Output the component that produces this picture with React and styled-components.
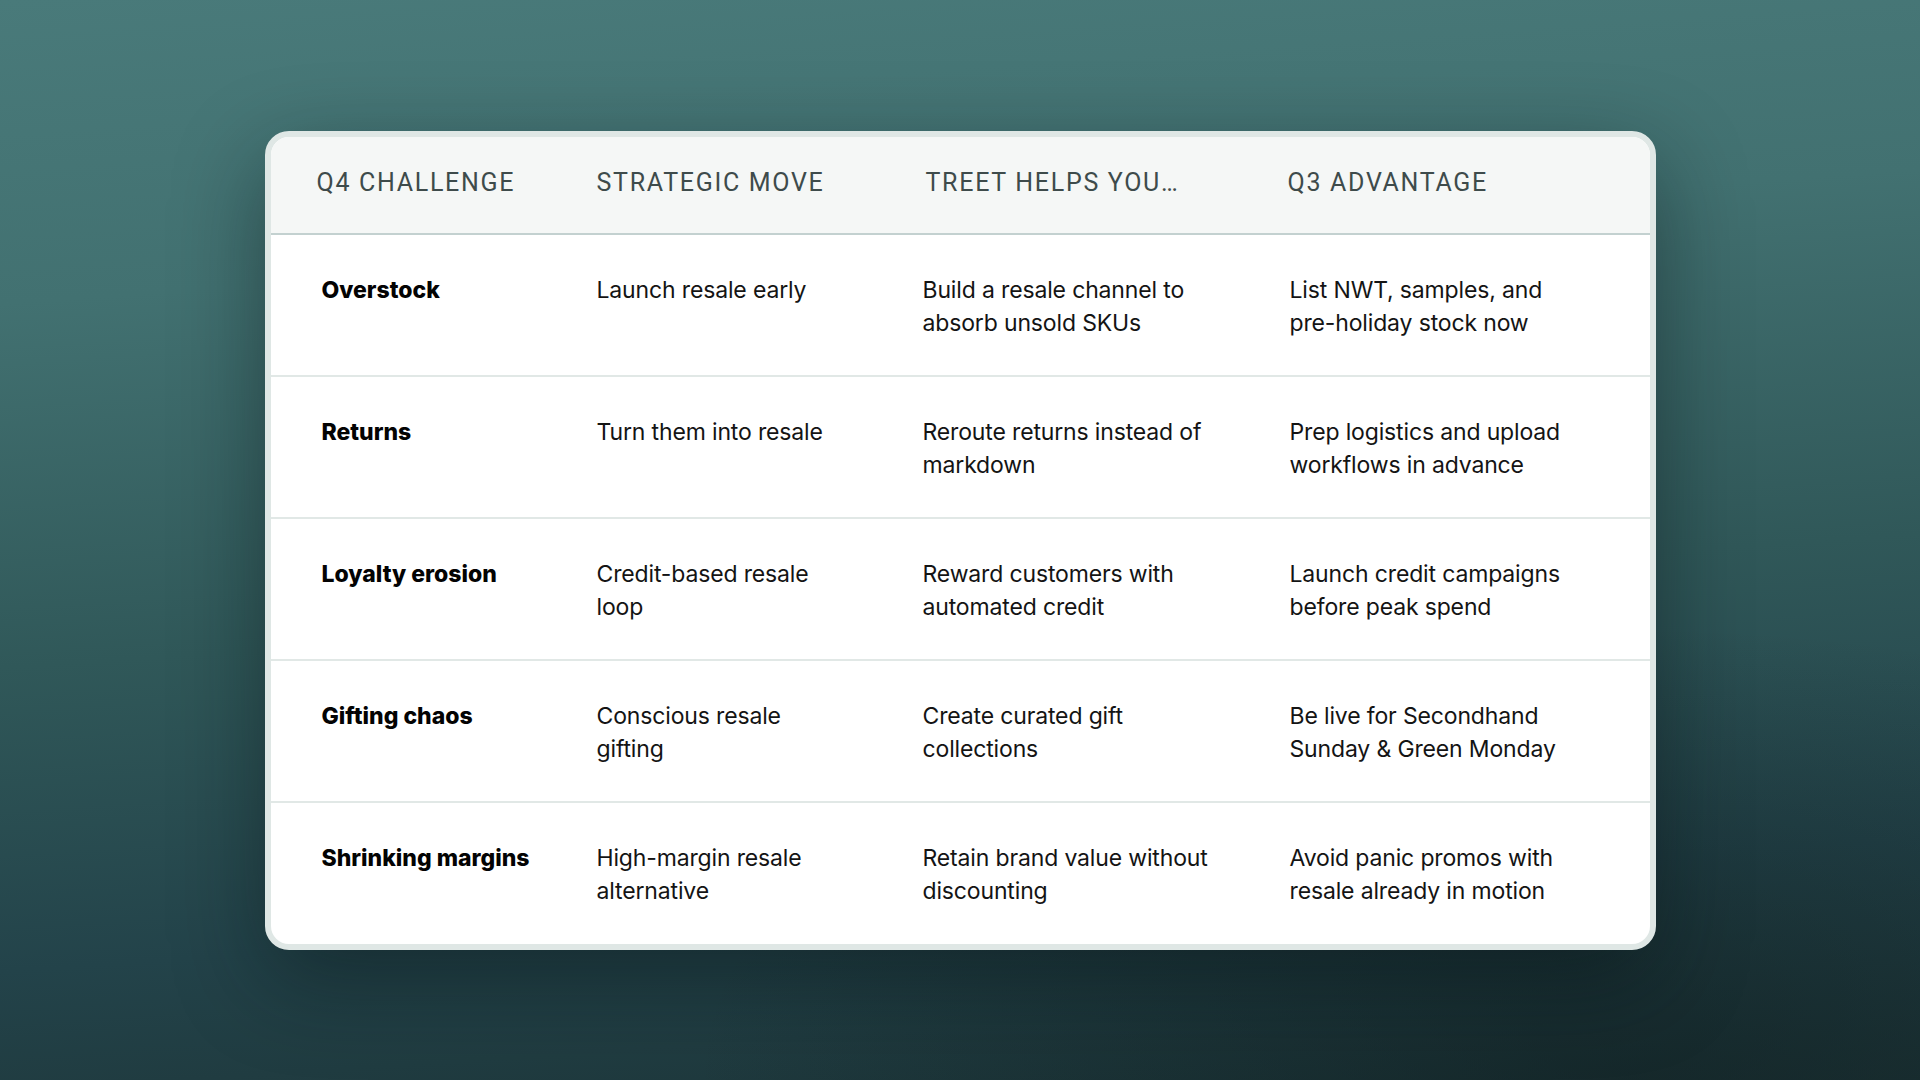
import React from 'react';
import styled, { createGlobalStyle } from 'styled-components';

const GlobalStyle = createGlobalStyle`
	html, body {
		margin: 0;
		padding: 0;
		height: 100%;
	}

	body {
		font-family: Inter, 'Liberation Sans', sans-serif;
		-webkit-font-smoothing: antialiased;
	}
`;

const Page = styled.div`
	display: flex;
	align-items: center;
	justify-content: center;

	width: 1920px;
	height: 1080px;

	background:
		radial-gradient(ellipse 70% 60% at 85% 100%, rgba(14, 28, 30, 0.55), rgba(14, 28, 30, 0) 70%),
		linear-gradient(176deg, #497a7a 0%, #427171 25%, #305859 55%, #23434a 80%, #1d3538 100%);
`;

const Card = styled.div`
	box-sizing: border-box;
	width: 1391px;

	border: 6px solid #dfe7e5;
	border-radius: 24px;
	overflow: hidden;

	background: #ffffff;
	box-shadow: 0 30px 90px rgba(6, 18, 20, 0.45);
`;

const GRID = '278px 326px 367px 1fr';

const HeaderRow = styled.div`
	display: grid;
	grid-template-columns: ${GRID};
	align-items: center;

	height: 98px;
	box-sizing: border-box;
	padding: 0 0 4px 48px;

	background: #f5f7f6;
	border-bottom: 2px solid #c3d1d0;
`;

const HeaderCell = styled.div`
	font-family: Roboto, 'Liberation Sans', sans-serif;
	font-size: 25px;
	font-weight: 400;
	letter-spacing: 1.7px;
	color: #3e4b4b;
	white-space: nowrap;
	margin-left: ${(p) => p.$shift || 0}px;
`;

const Row = styled.div`
	display: grid;
	grid-template-columns: ${GRID};
	align-items: start;

	height: 142px;
	box-sizing: border-box;
	padding: 39px 0 0 48px;

	border-bottom: 2px solid #e1e8e6;

	&:last-child {
		height: 141px;
		border-bottom: none;
	}
`;

const Cell = styled.div`
	font-size: 23px;
	line-height: 33px;
	font-weight: ${(p) => (p.$strong ? 800 : 400)};
	color: ${(p) => (p.$strong ? '#030303' : '#141414')};
	letter-spacing: ${(p) => (p.$strong ? '0px' : '-0.15px')};
	white-space: pre-line;
	margin-left: ${(p) => (p.$strong ? 3 : 0)}px;
`;

const headers = ['Q4 CHALLENGE', 'STRATEGIC MOVE', 'TREET HELPS YOU…', 'Q3 ADVANTAGE'];
const headerShift = [-2, 0, 3, -2];

const rows = [
	['Overstock', 'Launch resale early', 'Build a resale channel to\nabsorb unsold SKUs', 'List NWT, samples, and\npre-holiday stock now'],
	['Returns', 'Turn them into resale', 'Reroute returns instead of\nmarkdown', 'Prep logistics and upload\nworkflows in advance'],
	['Loyalty erosion', 'Credit-based resale\nloop', 'Reward customers with\nautomated credit', 'Launch credit campaigns\nbefore peak spend'],
	['Gifting chaos', 'Conscious resale\ngifting', 'Create curated gift\ncollections', 'Be live for Secondhand\nSunday & Green Monday'],
	['Shrinking margins', 'High-margin resale\nalternative', 'Retain brand value without\ndiscounting', 'Avoid panic promos with\nresale already in motion'],
];

const App = () => (
	<>
		<GlobalStyle />
		<Page>
			<Card>
				<HeaderRow>
					{headers.map((h, i) => (
						<HeaderCell key={h} $shift={headerShift[i]}>
							{h}
						</HeaderCell>
					))}
				</HeaderRow>

				{rows.map((r) => (
					<Row key={r[0]}>
						{r.map((text, i) => (
							<Cell key={i} $strong={i === 0}>
								{text}
							</Cell>
						))}
					</Row>
				))}
			</Card>
		</Page>
	</>
);

export default App;
